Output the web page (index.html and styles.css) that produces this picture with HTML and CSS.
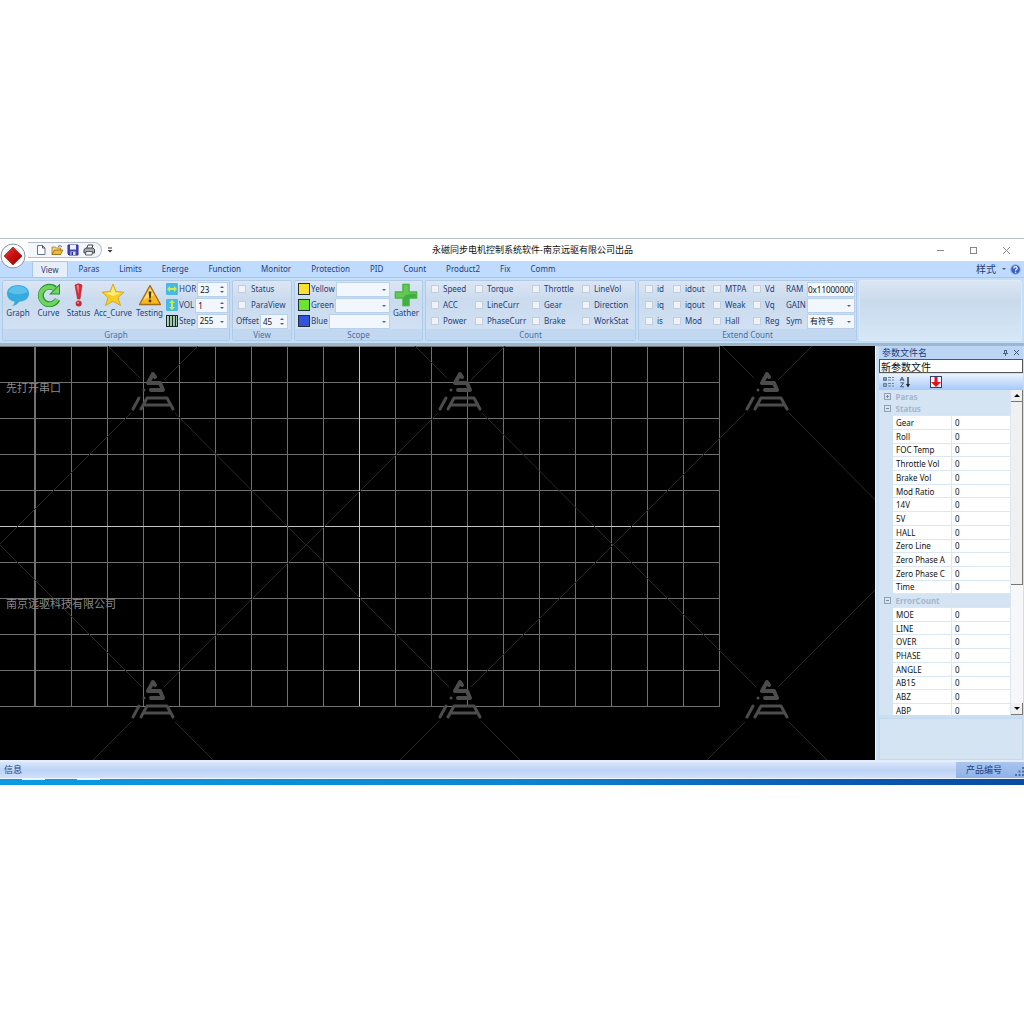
FILE: index.html
```html
<!DOCTYPE html>
<html lang="zh-CN">
<head>
<meta charset="utf-8">
<meta name="viewport" content="width=device-width, initial-scale=1">
<title>永磁同步电机控制系统软件</title>
<link rel="stylesheet" href="styles.css">
</head>
<body>
<div class="window">
  <button class="orb" aria-label="Menu">
    <svg width="26" height="26" viewBox="0 0 26 26"><defs><linearGradient id="red" x1="0" y1="0" x2="1" y2="1"><stop offset="0" stop-color="#e8443c"/><stop offset=".5" stop-color="#c80d0d"/><stop offset="1" stop-color="#8d0404"/></linearGradient></defs><circle cx="13" cy="13" r="12" fill="#e9edf3" stroke="#8d97a8"/><circle cx="13" cy="13" r="10" fill="none" stroke="#fff" stroke-width="2"/><path d="M13 4 22 13 13 22 4 13Z" fill="url(#red)" stroke="#7c1512" stroke-width=".6"/></svg>
  </button>
  <header class="titlebar">
    <div class="quick">
      <button aria-label="New"><svg width="12" height="12" viewBox="0 0 12 12"><path d="M2.500 1.500H7.500L10 4V10.500H2.500Z" fill="#fff" stroke="#6a7690"/><path d="M7.500 1.500V4H10" fill="none" stroke="#444c60"/></svg></button>
      <button aria-label="Open"><svg width="12" height="12" viewBox="0 0 12 12"><path d="M1 10.500V3H4.500L5.500 4H9.500V10.500Z" fill="#f6d27a" stroke="#a87b1e" stroke-width=".8"/><path d="M1 10.500 3.500 6H11.800L9.500 10.500Z" fill="#f0b93c" stroke="#8f6614" stroke-width=".8"/><path d="M7 2.500Q9.500 .5 11 3" fill="none" stroke="#57627a"/></svg></button>
      <button aria-label="Save"><svg width="12" height="12" viewBox="0 0 12 12"><path d="M1 1H11V11H2L1 10Z" fill="#4446b4" stroke="#2c2e86"/><rect x="3" y="1" width="6" height="4.500" fill="#eef1ff"/><rect x="3.500" y="7.500" width="5" height="3.500" fill="#d8dcf0"/><rect x="4.500" y="8" width="1.500" height="3" fill="#2c2e86"/></svg></button>
      <button aria-label="Print"><svg width="12" height="12" viewBox="0 0 12 12"><path d="M3.500 5 5 1H10L8.800 5" fill="#fff" stroke="#444"/><path d="M1 5.500 3 4H10L11.500 5.500V9H1Z" fill="#a8acb6" stroke="#3f434c"/><path d="M3 7.500H9.500L9 11H2.500Z" fill="#f4f4f4" stroke="#444" stroke-width=".8"/></svg></button>
    </div>
    <button class="more" aria-label="Customize"><svg width="6" height="6" viewBox="0 0 6 6"><path d="M1 1H5" stroke="#333"/><path d="M.5 3H5.500L3 5.500Z" fill="#333"/></svg></button>
    <h1>永磁同步电机控制系统软件-南京远驱有限公司出品</h1>
    <div class="winbtns">
      <button aria-label="Minimize"><svg width="9" height="9"><path d="M1 4.500H8" stroke="#888"/></svg></button>
      <button aria-label="Maximize"><svg width="9" height="9"><rect x="1.500" y="1.500" width="6" height="6" fill="none" stroke="#888"/></svg></button>
      <button aria-label="Close"><svg width="9" height="9"><path d="M1 1 8 8M8 1 1 8" stroke="#888"/></svg></button>
    </div>
  </header>

  <nav class="tabs">
    <button class="active">View</button><button>Paras</button><button>Limits</button><button>Energe</button><button>Function</button><button>Monitor</button><button>Protection</button><button>PID</button><button>Count</button><button>Product2</button><button>Fix</button><button>Comm</button>
    <div class="tabs-end">
      <button class="style">样式<i class="caret"></i></button>
      <button class="help" aria-label="Help"><svg width="11" height="11" viewBox="0 0 11 11"><circle cx="5.500" cy="5.500" r="4.800" fill="#3a5fc4" stroke="#9db6e6"/><path d="M3.800 4.400Q3.800 2.700 5.500 2.700T7.200 4.300Q7.200 5.200 5.600 5.900V6.800" fill="none" stroke="#fff" stroke-width="1.200"/><circle cx="5.600" cy="8.300" r=".7" fill="#fff"/></svg></button>
    </div>
  </nav>

  <div class="ribbon">
    <section class="group graph">
      <div class="group-body">
        <div class="bigs">
          <button class="big"><svg width="24" height="24" viewBox="0 0 24 24"><path d="M12 2C5.500 2 1 5.500 1 10.500S4.500 18 8.500 18.500C8.500 20.500 7.500 22 6 23C9.500 22.500 12 21 13 18.800C19 18.500 23 15.500 23 10.500S18.500 2 12 2Z" fill="#36a9de"/><path d="M12 3C7 3 3 5.500 2.500 9C8 12 16 12 21.500 9C21 5.500 17 3 12 3Z" fill="#5cc0ec"/></svg>Graph</button>
          <button class="big"><svg width="24" height="24" viewBox="0 0 24 24"><path d="M18 5.500A8.800 8.800 0 1 0 20.500 16.500" fill="none" stroke="#27943a" stroke-width="6"/><path d="M12 11.500H23V.5Z" fill="#27943a"/><path d="M17.500 6A8.600 8.600 0 1 0 20 16.200" fill="none" stroke="#72d35e" stroke-width="4"/><path d="M14.500 10.500H22V3Z" fill="#72d35e"/></svg>Curve</button>
          <button class="big"><svg width="24" height="24" viewBox="0 0 24 24"><path d="M8 2Q11.500-.5 15 2L13 16H10.500Z" fill="#d72e36" stroke="#b31c28" stroke-width=".6"/><path d="M9.500 3Q11-.2 12 3L11.500 11Z" fill="#f0838a"/><circle cx="11.700" cy="20.500" r="3" fill="#c92832"/><circle cx="11" cy="19.700" r="1" fill="#f0989c"/></svg>Status</button>
          <button class="big"><svg width="24" height="24" viewBox="0 0 24 24"><path d="M12 1 15 8.500 23 9.200 17 14.500 19.500 22.500 12 18.300 4.500 22.500 7 14.500 1 9.200 9 8.500Z" fill="#f5cf28" stroke="#cf9e15" stroke-width=".8" stroke-linejoin="round"/><path d="M12 3 14.300 9.500 20 10 12 13 4 10 9.800 9.500Z" fill="#fdec78"/></svg>Acc_Curve</button>
          <button class="big"><svg width="24" height="24" viewBox="0 0 24 24"><path d="M12 2.500 22.500 21.500H1.500Z" fill="#f8b81e" stroke="#a36c18" stroke-width="1.300" stroke-linejoin="round"/><path d="M12 5 16 12Q11 14 5.500 17Z" fill="#ffe07a"/><path d="M10.600 8.500H13.400L12.700 15.500H11.300Z" fill="#4a3310"/><circle cx="12" cy="18" r="1.400" fill="#4a3310"/></svg>Testing</button>
        </div>
        <div class="stack settings">
          <div class="row"><svg width="12" height="12" viewBox="0 0 12 12"><rect width="12" height="12" rx="1" fill="#47b9e4"/><path d="M1 6 4 3V5H8V3L11 6 8 9V7H4V9Z" fill="#c8f04a"/></svg><label for="hor">HOR</label><span class="spin"><input id="hor" value="23"></span></div>
          <div class="row"><svg width="12" height="12" viewBox="0 0 12 12"><rect width="12" height="12" rx="1" fill="#47b9e4"/><path d="M6 1 9 4H7V8H9L6 11 3 8H5V4H3Z" fill="#c8f04a"/></svg><label for="vol">VOL</label><span class="spin"><input id="vol" value="1"></span></div>
          <div class="row"><svg width="12" height="12" viewBox="0 0 12 12"><rect x=".5" y=".5" width="11" height="11" fill="#b5d8ba" stroke="#1b2a2a"/><path d="M3.500 0V12M6.500 0V12M9.500 0V12" stroke="#1b2a2a" stroke-width="1.200"/></svg><label for="step">Step</label><span class="combo"><select id="step"><option>255</option></select></span></div>
        </div>
      </div>
      <h2>Graph</h2>
    </section>

    <section class="group view">
      <div class="group-body">
        <div class="stack">
          <label class="check"><input type="checkbox">Status</label>
          <label class="check"><input type="checkbox">ParaView</label>
          <div class="row"><label for="offset">Offset</label><span class="spin"><input id="offset" value="45"></span></div>
        </div>
      </div>
      <h2>View</h2>
    </section>

    <section class="group scope">
      <div class="group-body">
        <div class="stack">
          <div class="row"><i class="swatch yellow"></i><label for="sy">Yellow</label><span class="combo"><select id="sy"><option></option></select></span></div>
          <div class="row"><i class="swatch green"></i><label for="sg">Green</label><span class="combo"><select id="sg"><option></option></select></span></div>
          <div class="row"><i class="swatch blue"></i><label for="sb">Blue</label><span class="combo"><select id="sb"><option></option></select></span></div>
        </div>
        <button class="big"><svg width="24" height="24" viewBox="0 0 24 24"><path d="M8.500 1H15.500V8.500H23V15.500H15.500V23H8.500V15.500H1V8.500H8.500Z" fill="#3fb040" stroke="#5fbd58" stroke-width=".8"/><path d="M9.500 2H14.500V9.500H22V11Q12 10 9.500 14.500H2V9.500H9.500Z" fill="#62c956"/></svg>Gather</button>
      </div>
      <h2>Scope</h2>
    </section>

    <section class="group count">
      <div class="group-body">
        <div class="checks">
          <label class="check"><input type="checkbox">Speed</label><label class="check"><input type="checkbox">Torque</label><label class="check"><input type="checkbox">Throttle</label><label class="check"><input type="checkbox">LineVol</label>
          <label class="check"><input type="checkbox">ACC</label><label class="check"><input type="checkbox">LineCurr</label><label class="check"><input type="checkbox">Gear</label><label class="check"><input type="checkbox">Direction</label>
          <label class="check"><input type="checkbox">Power</label><label class="check"><input type="checkbox">PhaseCurr</label><label class="check"><input type="checkbox">Brake</label><label class="check"><input type="checkbox">WorkStat</label>
        </div>
      </div>
      <h2>Count</h2>
    </section>

    <section class="group extend">
      <div class="group-body">
        <div class="checks">
          <label class="check"><input type="checkbox">id</label><label class="check"><input type="checkbox">idout</label><label class="check"><input type="checkbox">MTPA</label><label class="check"><input type="checkbox">Vd</label>
          <label class="check"><input type="checkbox">iq</label><label class="check"><input type="checkbox">iqout</label><label class="check"><input type="checkbox">Weak</label><label class="check"><input type="checkbox">Vq</label>
          <label class="check"><input type="checkbox">is</label><label class="check"><input type="checkbox">Mod</label><label class="check"><input type="checkbox">Hall</label><label class="check"><input type="checkbox">Reg</label>
        </div>
        <div class="fields">
          <label for="ram">RAM</label><input id="ram" class="text" value="0x11000000">
          <label for="gain">GAIN</label><span class="combo"><select id="gain"><option></option></select></span>
          <label for="sym">Sym</label><span class="combo"><select id="sym"><option>有符号</option></select></span>
        </div>
      </div>
      <h2>Extend Count</h2>
    </section>
    <div class="rest"></div>
  </div>

  <div class="workspace">
    <main class="plot">
      <svg class="canvas" role="img" aria-label="Scope">
        <defs>
          <pattern id="cell" x="35" y="0" width="36" height="36" patternUnits="userSpaceOnUse"><path d="M.5 0V36M0 .5H36" stroke="#707070" fill="none"/></pattern>
          <g id="mark">
            <g fill="none" stroke="#282828" stroke-width="1"><path d="M11-12 46-47M-13-14-46-47M22 21 153 153M-22 21-154 153M11 295 153 153M-11 295-153 153M22 330 110 418M-22 330-110 418"/></g>
            <g id="logo" fill="none" stroke="#4c4c4c" stroke-width="4" stroke-linecap="round" stroke-linejoin="round"><path d="M2-15 0-18-5-9H7L10-2H-2"/><path d="M-14 6-20 17M-12 17-6 6H14L20 17M-9 13H17" stroke-width="3"/><path d="M-9-2h0" stroke-width="3"/></g>
            <use href="#logo" y="308"/>
          </g>
        </defs>
        <rect width="720" height="361" fill="url(#cell)"/>
        <path d="M35 0V360" stroke="#707070" stroke-width="2"/>
        <path d="M359.500 0V360M0 180.500H720" stroke="#c4c4c4"/>
        <use href="#mark" x="153" y="46"/><use href="#mark" x="460" y="46"/><use href="#mark" x="767" y="46"/>
        <text x="6" y="46">先打开串口</text>
        <text x="6" y="262">南京远驱科技有限公司</text>
      </svg>
    </main>
    <aside class="panel">
      <div class="panel-title"><h2>参数文件名</h2><button aria-label="Pin"><svg width="7" height="8"><path d="M2.500 1V4.500M4.500 1V4.500M1 4.500H6M3.500 4.500V7M2.500 1.500H4.500" stroke="#40557a" stroke-width=".9" fill="none"/></svg></button><button aria-label="Close panel"><svg width="7" height="7"><path d="M1 1 6 6M6 1 1 6" stroke="#40557a"/></svg></button></div>
      <input class="filename" aria-label="文件名" value="新参数文件">
      <div class="tools">
        <button aria-label="Categorized"><svg width="13" height="12" viewBox="0 0 13 12"><path d="M1.500 1.500H4.500V4.500H1.500ZM1.500 7.500H4.500V10.500H1.500ZM3 2V4M2 3H4M2 9H4" fill="none" stroke="#50647e" stroke-width=".8"/><path d="M6 1.500H9M6 4H9M6 7.500H9M6 10H9M10 1.500H12M10 4H12M10 7.500H12M10 10H12" stroke="#6d819b"/></svg></button>
        <button aria-label="Sort"><svg width="12" height="12" viewBox="0 0 12 12"><path d="M1 5 3 1 5 5M1.700 3.800H4.300M1.500 6.800H4.700L1.500 10.800H5" fill="none" stroke="#3d4b62" stroke-width=".9"/><path d="M9 1V10" stroke="#222" stroke-width="1.300"/><path d="M7 8H11L9 11.500Z" fill="#222"/></svg></button>
        <button class="load" aria-label="Load"><svg width="12" height="12" viewBox="0 0 12 12"><rect x=".5" y=".5" width="11" height="11" fill="#f4f6ff" stroke="#3b3b6a"/><path d="M4.500 1H7.500V6H11L6 11 1 6H4.500Z" fill="#e8101c"/></svg></button>
      </div>
      <div class="props">
        <div class="props-view">
          <table>
            <colgroup><col class="c-gutter"><col class="c-name"><col></colgroup>
            <tbody>
            <tr class="cat"><th class="fold"><i class="box plus"></i></th><th colspan="2">Paras</th></tr>
            <tr class="cat"><th class="fold"><i class="box"></i></th><th colspan="2">Status</th></tr>
            <tr><td></td><td>Gear</td><td>0</td></tr>
            <tr><td></td><td>Roll</td><td>0</td></tr>
            <tr><td></td><td>FOC Temp</td><td>0</td></tr>
            <tr><td></td><td>Throttle Vol</td><td>0</td></tr>
            <tr><td></td><td>Brake Vol</td><td>0</td></tr>
            <tr><td></td><td>Mod Ratio</td><td>0</td></tr>
            <tr><td></td><td>14V</td><td>0</td></tr>
            <tr><td></td><td>5V</td><td>0</td></tr>
            <tr><td></td><td>HALL</td><td>0</td></tr>
            <tr><td></td><td>Zero Line</td><td>0</td></tr>
            <tr><td></td><td>Zero Phase A</td><td>0</td></tr>
            <tr><td></td><td>Zero Phase C</td><td>0</td></tr>
            <tr><td></td><td>Time</td><td>0</td></tr>
            <tr class="cat"><th class="fold"><i class="box"></i></th><th colspan="2">ErrorCount</th></tr>
            <tr><td></td><td>MOE</td><td>0</td></tr>
            <tr><td></td><td>LINE</td><td>0</td></tr>
            <tr><td></td><td>OVER</td><td>0</td></tr>
            <tr><td></td><td>PHASE</td><td>0</td></tr>
            <tr><td></td><td>ANGLE</td><td>0</td></tr>
            <tr><td></td><td>AB15</td><td>0</td></tr>
            <tr><td></td><td>ABZ</td><td>0</td></tr>
            <tr><td></td><td>ABP</td><td>0</td></tr>
            </tbody>
          </table>
        </div>
        <div class="scroll">
          <button aria-label="Up"><i class="tri up"></i></button>
          <div class="thumb"></div>
          <div class="track"></div>
          <button aria-label="Down"><i class="tri"></i></button>
        </div>
      </div>
      <div class="desc"></div>
    </aside>
  </div>

  <footer class="status">
    <span>信息</span>
    <span class="serial">产品编号<svg width="9" height="9" viewBox="0 0 9 9"><path d="M7 0h2v2h-2zM3.500 3.500h2v2h-2zM7 3.500h2v2h-2zM0 7h2v2h-2zM3.500 7h2v2h-2zM7 7h2v2h-2z" fill="#52719f"/></svg></span>
  </footer>
  <div class="taskbar"><i></i><i></i></div>
</div>
</body>
</html>
```

FILE: styles.css
```css
* { box-sizing: border-box; }

body {
  margin: 0;
  min-height: 100vh;
  padding-bottom: 1px;
  display: flex;
  flex-direction: column;
  justify-content: center;
  background: #fff;
  color: #1d3f7c;
  font: 8px/12px "Noto Sans", "Noto Sans CJK SC", sans-serif;
}

h1, h2 { margin: 0; font-size: 8px; font-weight: 400; }

button, input, select {
  font: inherit;
  color: inherit;
  border: 0;
  margin: 0;
  padding: 0;
  background: none;
  border-radius: 0;
  min-width: 0;
}

svg { display: block; flex: none; }

.window { position: relative; border-top: 1px solid #b9c0c4; }

.orb { position: absolute; left: 0; top: 4px; }

/* title bar */
.titlebar { display: flex; align-items: center; height: 22px; background: #fff; }

.quick {
  display: flex;
  align-items: center;
  gap: 4px;
  height: 16px;
  margin-left: 28px;
  padding: 0 6px 0 7px;
  border: 1px solid #b4bfce;
  border-left: 0;
  border-radius: 0 8px 8px 0;
  background: #f3f6fa;
}

.more { margin: 0 16px 0 5px; }

.titlebar h1 { flex: 1; text-align: center; color: #111; font-size: 9px; }

.winbtns { display: flex; gap: 24px; padding-right: 13px; }

/* tabs */
.tabs { display: flex; height: 16px; padding-left: 32px; background: #bfdbff; }
.tabs > button { padding: 0 10px; }
.tabs > .active {
  margin-right: 1px;
  padding: 0 8px;
  background: #e6eff9;
  border: 1px solid #a9c5ea;
  border-bottom: 0;
  border-radius: 2px 2px 0 0;
}
.tabs-end { display: flex; align-items: center; gap: 4px; margin-left: auto; padding-right: 3px; }
.style { display: flex; align-items: center; gap: 6px; font-size: 10px; }

.caret { border: 2px solid transparent; border-top-color: #4b5d78; border-bottom: 0; }

/* ribbon */
.ribbon {
  display: flex;
  gap: 2px;
  height: 69px;
  padding: 2px;
  background: #c5def8;
  border-top: 1px solid #a6c6ec;
  border-bottom: 3px solid #9eb8cb;
}

.group {
  display: flex;
  flex-direction: column;
  flex: none;
  border: 1px solid #b0cbe8;
  border-radius: 2px;
  background: linear-gradient(#dbe6f4, #cbdbee 30%, #d3e3f5);
}

.group h2 { height: 11px; line-height: 11px; text-align: center; color: #4c6fa5; background: #c1d8f0; }

.group-body { display: flex; flex: 1; align-items: flex-start; }

.graph { width: 228px; }
.view { width: 60px; }
.scope { width: 129px; }
.count { width: 211px; }
.extend { width: 219px; }
.rest {
  flex: 1;
  border: 1px solid #dbeaf9;
  border-radius: 2px;
  background: linear-gradient(#dbe6f3, #c9daec 35%, #d6e7f8);
}

.stack { display: flex; flex-direction: column; flex: 1; min-width: 0; }
.row { display: flex; align-items: center; gap: 1px; height: 16px; }

.bigs { display: grid; grid-template-columns: 30px 31px 29px 40px 33px; }
.big { display: flex; flex-direction: column; align-items: center; justify-self: center; padding-top: 2px; }

.settings { padding-right: 1px; }

.spin, .combo { position: relative; display: flex; flex: 1; min-width: 0; height: 15px; }
.spin input, .combo select, .text {
  width: 100%;
  height: 15px;
  padding: 0 2px;
  color: #111;
  background: #f2f7fd;
  border: 1px solid #b9d0ea;
  appearance: none;
}
.spin::before, .spin::after, .combo::after {
  content: "";
  position: absolute;
  right: 4px;
  border: 2px solid transparent;
}
.spin::before { top: 4px; border-bottom-color: #53627a; border-top: 0; }
.spin::after { top: 9px; border-top-color: #53627a; border-bottom: 0; }
.combo::after { top: 7px; border-top-color: #53627a; border-bottom: 0; }

.check { display: flex; align-items: center; gap: 4px; height: 16px; white-space: nowrap; }
.check input {
  flex: none;
  width: 8px;
  height: 8px;
  appearance: none;
  background: #f0f2f5;
  border: 1px solid #c3cedb;
}

.view .stack { padding: 0 3px; }
.view .check { padding-left: 2px; gap: 5px; }

.scope .stack { padding-left: 3px; }
.scope .big { width: 32px; }
.swatch { width: 12px; height: 12px; border: 1px solid #25303c; flex: none; }
.yellow { background: #ffe02e; }
.green { background: #6be52c; }
.blue { background: #2f55e0; }

.checks { display: grid; }
.count .checks { grid-template-columns: 44px 57px 50px 48px; padding-left: 5px; }
.extend .checks { grid-template-columns: 28px 40px 40px 33px; padding-left: 6px; }

.fields { display: grid; grid-template-columns: 21px 1fr; grid-auto-rows: 16px; align-items: center; flex: 1; padding-right: 1px; }
.fields .text { padding: 0; }

/* workspace */
.workspace { display: flex; background: #c9dff5; }
.plot { flex: 1; min-width: 0; background: #000; }
.canvas { width: 100%; height: 414px; }
.canvas text { fill: #8a8a8a; font-family: "Noto Sans CJK SC", sans-serif; font-size: 11px; }

.panel { display: flex; flex-direction: column; width: 149px; padding: 0 1px 0 3px; border-left: 1px solid #eef5fc; }
.panel-title { display: flex; align-items: center; gap: 4px; height: 13px; padding: 0 3px; background: #bcd5f4; }
.panel-title h2 { flex: 1; font-size: 9px; }
.filename { height: 14px; padding: 0 1px; font-size: 10px; color: #111; background: #fff; border: 1px solid #555; }
.tools { display: flex; align-items: center; gap: 4px; height: 16px; margin-top: 1px; padding-left: 3px; background: linear-gradient(#eaf3ff, #a6c9f8); }
.load { margin-left: 15px; }

.props { display: flex; height: 325px; background: #d5e4f2; }
.props-view { flex: 1; overflow: hidden; }
.props table { width: 100%; height: 328px; table-layout: fixed; border-collapse: collapse; }
.c-gutter { width: 13px; }
.c-name { width: 59px; }
.props td {
  padding: 0 0 0 3px;
  line-height: 11px;
  color: #111;
  white-space: nowrap;
  background: #fff;
  border: 1px solid #dbe7f2;
}
.props td:first-child { background: #d5e4f2; border-color: #d5e4f2; }
.props th { padding: 0 0 0 3px; line-height: 11px; text-align: left; color: #a3b7cf; background: #d5e4f2; }
.props .fold { padding: 0 0 0 4px; }

.box { display: block; width: 7px; height: 7px; border: 1px solid #93a3b5; background: linear-gradient(#7a8b9e, #7a8b9e) center / 3px 1px no-repeat; }
.box.plus { background: linear-gradient(#7a8b9e, #7a8b9e) center / 3px 1px no-repeat, linear-gradient(#7a8b9e, #7a8b9e) center / 1px 3px no-repeat; }

.scroll { display: flex; flex-direction: column; width: 12px; background: #f6f7f8; }
.scroll button {
  display: flex;
  align-items: center;
  justify-content: center;
  height: 12px;
  background: #f0f0f0;
  border-right: 1px solid #777;
  border-bottom: 1px solid #777;
}
.thumb { flex: 183; background: #f0f0f0; border-right: 1px solid #777; border-bottom: 1px solid #777; }
.track { flex: 118; }
.tri { border: 3px solid transparent; border-top-color: #000; border-bottom: 0; }
.tri.up { border: 3px solid transparent; border-bottom-color: #000; border-top: 0; }

.desc { flex: 1; margin-top: 3px; background: #d5e4f2; border: 1px solid #c5d9ec; }

/* status bar */
.status {
  display: flex;
  align-items: center;
  justify-content: space-between;
  height: 19px;
  padding-left: 4px;
  font-size: 9px;
  border-top: 2px solid #e5eefa;
  border-bottom: 1px solid #eef5ff;
  background: linear-gradient(#d9e7fb, #bdd3f5 50%, #cfe0f9);
}
.serial {
  display: flex;
  align-items: flex-end;
  justify-content: space-between;
  width: 68px;
  padding: 2px 0 2px 10px;
  background: linear-gradient(#a9c5f0, #8fb2e6);
}

.taskbar { display: flex; gap: 32px; height: 6px; padding-left: 22px; background: linear-gradient(90deg, #0a9be0, #0b86d0 50%, #0a56b0 85%, #084d9f); }
.taskbar i { width: 23px; height: 1px; background: #e8f4fb; }
```
